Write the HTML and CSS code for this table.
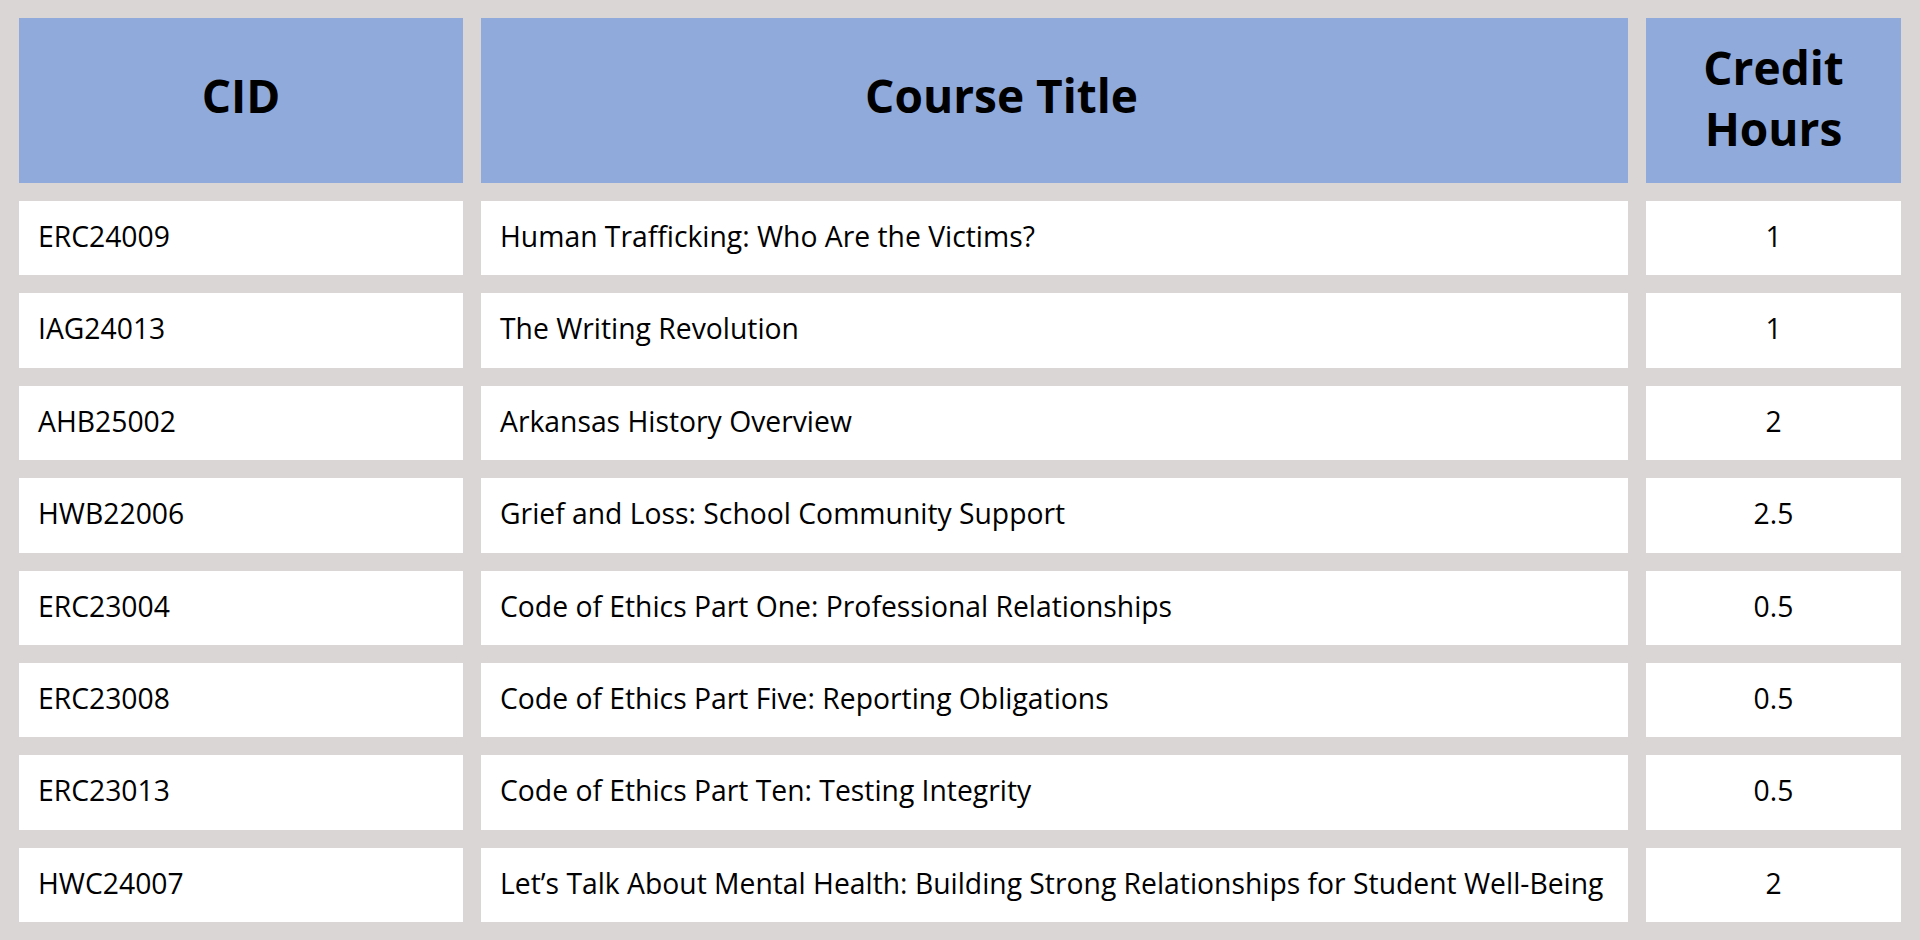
FILE: index.html
```html
<!DOCTYPE html>
<html lang="en">
<head>
<meta charset="utf-8">
<title>Courses</title>
<link rel="stylesheet" href="styles.css">
</head>
<body>
<div class="table">
  <div class="cell head">CID</div>
  <div class="cell head title">Course Title</div>
  <div class="cell head two">Credit<br>Hours</div>

  <div class="cell">ERC24009</div>
  <div class="cell">Human Trafficking: Who Are the Victims?</div>
  <div class="cell num">1</div>

  <div class="cell">IAG24013</div>
  <div class="cell">The Writing Revolution</div>
  <div class="cell num">1</div>

  <div class="cell">AHB25002</div>
  <div class="cell">Arkansas History Overview</div>
  <div class="cell num">2</div>

  <div class="cell">HWB22006</div>
  <div class="cell">Grief and Loss: School Community Support</div>
  <div class="cell num">2.5</div>

  <div class="cell">ERC23004</div>
  <div class="cell">Code of Ethics Part One: Professional Relationships</div>
  <div class="cell num">0.5</div>

  <div class="cell">ERC23008</div>
  <div class="cell">Code of Ethics Part Five: Reporting Obligations</div>
  <div class="cell num">0.5</div>

  <div class="cell">ERC23013</div>
  <div class="cell">Code of Ethics Part Ten: Testing Integrity</div>
  <div class="cell num">0.5</div>

  <div class="cell">HWC24007</div>
  <div class="cell">Let’s Talk About Mental Health: Building Strong Relationships for Student Well-Being</div>
  <div class="cell num">2</div>
</div>
</body>
</html>
```
FILE: styles.css
```css
html, body {
  margin: 0;
  padding: 0;
}
body {
  background: #dad6d5;
  font-family: "Open Sans", "Noto Sans", "Liberation Sans", sans-serif;
  color: #000;
}
.table {
  box-sizing: border-box;
  width: 1920px;
  height: 940px;
  padding: 18px 19px;
  display: grid;
  grid-template-columns: 444px 1147px 255px;
  grid-template-rows: 165px repeat(8, 1fr);
  column-gap: 18px;
  row-gap: 18px;
}
.cell {
  background: #fff;
  display: flex;
  align-items: center;
  padding: 0 19px 4px 19px;
  font-size: 28.3px;
  line-height: 1;
}
.cell.num {
  justify-content: center;
}
.cell.head {
  background: #8faadb;
  justify-content: center;
  text-align: center;
  font-weight: 700;
  font-size: 46px;
  line-height: 61px;
  padding-bottom: 10px;
}
.cell.head.title {
  padding-right: 125px;
}
.cell.head.two {
  padding-bottom: 5px;
}
```
